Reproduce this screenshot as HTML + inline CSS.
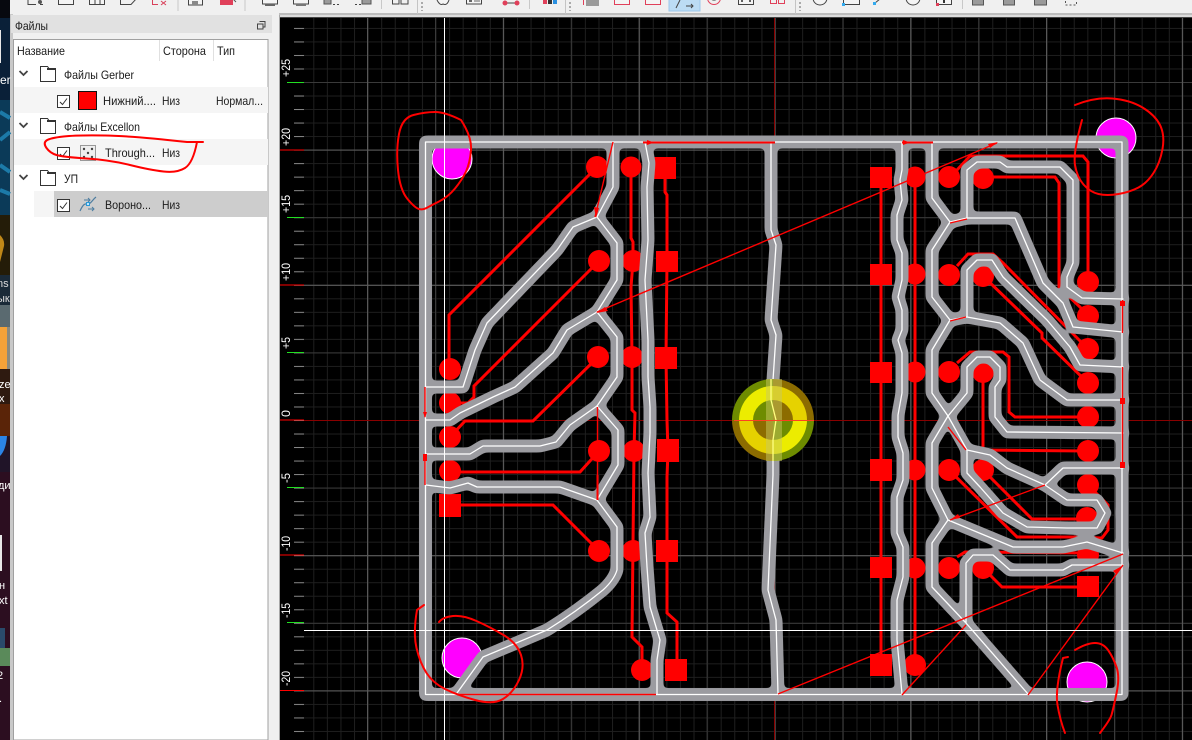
<!DOCTYPE html>
<html><head><meta charset="utf-8"><style>
html,body{margin:0;padding:0;background:#000;width:1192px;height:740px;overflow:hidden}
svg{display:block}
text{font-family:"Liberation Sans","Noto Sans CJK SC",sans-serif}
.t{font-size:12px;fill:#1a1a1a}
.r{font-size:12px;fill:#fff}
.tb{fill:#f4f4f4;stroke:#444;stroke-width:1}
.tg{fill:#9a9a9a;stroke:#555;stroke-width:1}
.tr{fill:#f4f4f4;stroke:#e0405a;stroke-width:1}
</style></head><body>
<svg width="1192" height="740" viewBox="0 0 1192 740" xmlns="http://www.w3.org/2000/svg">
<defs>
<filter id="smooth" filterUnits="userSpaceOnUse" x="380" y="100" width="790" height="630" color-interpolation-filters="sRGB">
<feGaussianBlur in="SourceAlpha" stdDeviation="2.2"/>
<feComponentTransfer result="a"><feFuncA type="linear" slope="10" intercept="-4.5"/></feComponentTransfer>
<feFlood flood-color="#9b9ba0"/>
<feComposite in2="a" operator="in"/>
</filter>
<pattern id="g1" patternUnits="userSpaceOnUse" x="775" y="420" width="13.58" height="13.52"><path d="M0.5 0V13.52M0 0.5H13.58" stroke="#1f1f1f" stroke-width="1" fill="none"/></pattern>
<pattern id="g5" patternUnits="userSpaceOnUse" x="774.5" y="420" width="67.9" height="67.6"><path d="M0.5 0V67.6M0 0.5H67.9" stroke="#3a3a3a" stroke-width="1" fill="none"/></pattern>
<pattern id="g10" patternUnits="userSpaceOnUse" x="774.5" y="420" width="135.8" height="135.2"><path d="M0.5 0V135.2M0 0.5H135.8" stroke="#5c5c5c" stroke-width="1" fill="none"/></pattern>
<pattern id="tick" patternUnits="userSpaceOnUse" x="294" y="420" width="10" height="13.52"><rect x="0" y="0" width="10" height="1" fill="#8a8a8a"/></pattern>
<g id="tr" fill="none" stroke-linejoin="round" stroke-linecap="round">
<path d="M425.5 142H1122V694.5H425.5Z"/>
<path d="M613 142V187L597 217L573 227L557 250L487 323L475 350L463 387H426"/>
<path d="M597 217L617 243V280L597 312L567 330L553 353L515 387L493 397L460 413L450 420H426"/>
<path d="M597 312L617 337V377L597 406L570 425L556 442L540 446H483L470 454H426"/>
<path d="M597 406L618 430V465L597 500L560 487H477L468 483L450 488L426 485"/>
<path d="M597 500L617 527V570Q614 580 603 590Q576 612 547 630L483 657L457 693"/>
<path d="M645 142L649 163L647 187L648 240L645 280L648 340V377L650 407L650 433L648 473L650 517L645 533L647 567L650 607L660 640L657 660V694"/>
<path d="M771 142V230L776 245L771 320L776 335L773 380V475L768 590L776 620L778 694"/>
<path d="M902 142V170L900 180L902 200L897 215V240L902 253V280L898 297L902 310V330L898 340L902 353V393L898 415V430L898 437L903 453V480L897 497V533L903 547V577L897 600V640L902 694"/>
<path d="M932 142V198L950 222L932 250V297L950 320L932 350V393L948 416L932 443V488L948 520L932 543V587L966 623L1028 694"/>
<path d="M948 520L1013 547H1063L1087 542L1123 553"/>
<path d="M948 416L967 393V367L977 357H990L1000 367V380L995 387V417L1007 432L1123 433"/>
<path d="M950 222L967 218H1015L1043 283L1063 303L1073 327L1123 332"/>
<path d="M967 218V170L977 162H1000L1007 167H1060L1073 180V263L1067 277V287L1082 298L1123 299"/>
<path d="M950 320L967 317L1000 323L1023 343L1040 380L1067 400H1123"/>
<path d="M967 317V270L977 260H992L1003 277L1047 320L1070 347L1080 365L1123 367"/>
<path d="M948 416L967 450L990 455L1007 468L1045 485L1063 468H1123"/>
<path d="M1045 485L1067 500H1097L1105 513L1097 528H1067L1027 527L1003 513L980 487L967 473V450"/>
<path d="M966 623V563L973 555H993L1010 570H1063L1072 565H1123"/>
</g>
</defs>

<!-- canvas -->
<rect x="279" y="17" width="913" height="723" fill="#000"/>
<rect x="304" y="18" width="888" height="722" fill="url(#g1)" shape-rendering="crispEdges"/>
<rect x="304" y="18" width="888" height="722" fill="url(#g5)" shape-rendering="crispEdges"/>
<rect x="304" y="18" width="888" height="722" fill="url(#g10)" shape-rendering="crispEdges"/>
<rect x="294" y="18" width="10" height="722" fill="url(#tick)" shape-rendering="crispEdges"/>
<g shape-rendering="crispEdges">
<path d="M287 82.5H304M287 217.5H304M287 352.5H304M287 487.5H304M287 622.5H304" stroke="#22e022" stroke-width="1"/>
<path d="M280 150H304M280 285H304M280 420H304M280 555H304M280 690.5H304" stroke="#ff0000" stroke-width="1"/>
</g>
<g>
<text class="r" transform="translate(290,77) rotate(-90)" textLength="18" lengthAdjust="spacingAndGlyphs">+25</text>
<text class="r" transform="translate(290,146) rotate(-90)" textLength="18" lengthAdjust="spacingAndGlyphs">+20</text>
<text class="r" transform="translate(290,213) rotate(-90)" textLength="18" lengthAdjust="spacingAndGlyphs">+15</text>
<text class="r" transform="translate(290,281) rotate(-90)" textLength="18" lengthAdjust="spacingAndGlyphs">+10</text>
<text class="r" transform="translate(290,349) rotate(-90)" textLength="12" lengthAdjust="spacingAndGlyphs">+5</text>
<text class="r" transform="translate(290,417) rotate(-90)" textLength="7" lengthAdjust="spacingAndGlyphs">0</text>
<text class="r" transform="translate(290,483) rotate(-90)" textLength="10" lengthAdjust="spacingAndGlyphs">-5</text>
<text class="r" transform="translate(290,551) rotate(-90)" textLength="15" lengthAdjust="spacingAndGlyphs">-10</text>
<text class="r" transform="translate(290,618) rotate(-90)" textLength="15" lengthAdjust="spacingAndGlyphs">-15</text>
<text class="r" transform="translate(290,686) rotate(-90)" textLength="15" lengthAdjust="spacingAndGlyphs">-20</text>
</g>

<!-- origin lines -->
<path d="M304 420.5H1192" stroke="#8a0000" stroke-width="1" shape-rendering="crispEdges"/>
<path d="M774.5 18V740" stroke="#8a0000" stroke-width="1" shape-rendering="crispEdges"/>

<!-- magenta -->
<g fill="#ff00ff" stroke="#fff" stroke-width="1">
<circle cx="452" cy="159" r="20"/><circle cx="462" cy="658" r="20"/><circle cx="1116" cy="138" r="20"/><circle cx="1087" cy="682" r="20"/>
</g>

<!-- copper traces -->
<g fill="none" stroke="#ff0000" stroke-width="3" stroke-linejoin="miter">
<path d="M597 167L449 315V369"/>
<path d="M599 261L474 386V397L468 403H450"/>
<path d="M598 357L533 421H465L450 437"/>
<path d="M599 451L580 472H450"/>
<path d="M599 551L553 505H450"/>
<path d="M631 167V238L633 242V261L631 287L632 357V410L635 413L634 451L632 637L642 647V670"/>
<path d="M665 167V192L667 195V261L666 357L667 420L668 451L667 477V613L677 622V670"/>
<path d="M881 177V665"/><path d="M915 177V665"/>
<path d="M957 170L970 156H1083L1088 162V282"/>
<path d="M983 177H1055L1059 183V287L1080 307L1088 316"/>
<path d="M957 266L968 254H993L1003 263L1088 349"/>
<path d="M983 276L1042 333V338L1088 383"/>
<path d="M957 363L970 352H1003L1009 357V412L1015 417H1088"/>
<path d="M983 372V450L1088 451"/>
<path d="M983 470L1032 519H1087"/>
<path d="M949 470L1017 537H1072"/>
<path d="M1088 485L1108 505V530L1102 538L1072 537"/>
<path d="M957 557L965 552L1088 553"/>
<path d="M983 568L1002 587H1088"/>
</g>
<g fill="#ff0000">
<circle cx="597" cy="167" r="11"/><circle cx="631" cy="167" r="10.5"/><rect x="654" y="157" width="22" height="22"/>
<circle cx="599" cy="261" r="11"/><circle cx="633" cy="261" r="11"/><rect x="656" y="251" width="22" height="21"/>
<circle cx="598" cy="357" r="11"/><circle cx="632" cy="357" r="11"/><rect x="655" y="347" width="22" height="22"/>
<circle cx="599" cy="451" r="11"/><circle cx="634" cy="451" r="11"/><rect x="657" y="439" width="22" height="23"/>
<circle cx="599" cy="551" r="11"/><circle cx="633" cy="551" r="11"/><rect x="656" y="540" width="22" height="22"/>
<circle cx="642" cy="670" r="11"/><rect x="665" y="659" width="22" height="22"/>
<circle cx="450" cy="369" r="11"/><circle cx="450" cy="403" r="11"/><circle cx="450" cy="437" r="11"/><circle cx="450" cy="471" r="11"/><rect x="439" y="494" width="22" height="23"/>
<rect x="870" y="167" width="22" height="21"/><circle cx="915" cy="177" r="10.5"/><circle cx="949" cy="177" r="11"/><circle cx="983" cy="178" r="11"/>
<rect x="870" y="264" width="22" height="21"/><circle cx="915" cy="274" r="10.5"/><circle cx="949" cy="275" r="11"/><circle cx="983" cy="276" r="11"/>
<rect x="870" y="362" width="22" height="21"/><circle cx="915" cy="372" r="10.5"/><circle cx="949" cy="372" r="11"/><circle cx="983" cy="372" r="11"/>
<rect x="870" y="459" width="22" height="22"/><circle cx="915" cy="470" r="10.5"/><circle cx="949" cy="470" r="11"/><circle cx="983" cy="470" r="11"/>
<rect x="870" y="557" width="22" height="21"/><circle cx="915" cy="568" r="10.5"/><circle cx="949" cy="568" r="11"/><circle cx="983" cy="568" r="11"/>
<rect x="870" y="654" width="22" height="22"/><circle cx="915" cy="665" r="11"/>
<circle cx="1088" cy="282" r="11"/><circle cx="1088" cy="316" r="11"/><circle cx="1088" cy="349" r="11"/><circle cx="1088" cy="383" r="11"/><circle cx="1088" cy="417" r="11"/><circle cx="1088" cy="451" r="11"/><circle cx="1088" cy="485" r="11"/><circle cx="1087" cy="518" r="11"/><circle cx="1088" cy="555" r="11"/><rect x="1077" y="576" width="22" height="21"/>
</g>

<!-- gray isolation + white centerline -->
<g filter="url(#smooth)"><use href="#tr" stroke="#9b9ba0" stroke-width="13"/></g>
<use href="#tr" stroke="#ffffff" stroke-width="1.3"/>

<!-- rapid moves -->
<g fill="none" stroke="#ff0000" stroke-width="1.4">
<path d="M613 142L595 217"/>
<path d="M997 143L597 312"/>
<path d="M643 142.5H775" stroke-width="2"/>
<path d="M902 142.5H933" stroke-width="2"/>
<path d="M597.5 407V500"/><path d="M597.5 475V500" stroke-width="2"/>
<path d="M425 387V417"/><path d="M425 454V485"/>
<path d="M457 694.5H656"/>
<path d="M950 223L967 219"/><path d="M950 321L966 317"/>
<path d="M1122.5 300V333"/><path d="M1122.5 367V468"/>
<path d="M948 427L966 450"/>
<path d="M1045 485L950 520"/>
<path d="M1123 554L778 694"/>
<path d="M1123 565L1028 695"/>
<path d="M966 625L902 695"/>
</g>
<g fill="#ff0000">
<path d="M647 140L654 142.5L647 145Z"/><path d="M903 140L910 142.5L903 145Z"/><path d="M998 142L988 144L990 148Z"/>
<path d="M596 218L599 208L594 207Z"/><path d="M596 313L605 307L608 311Z"/>
<path d="M423 412L427 412L425 418Z"/><path d="M423 454L427 454L427 461L423 461Z"/>
<path d="M1120 301H1125V306H1120Z"/><path d="M1120 398H1125V404H1120Z"/><path d="M1120 462H1125V468H1120Z"/>
<path d="M950 520L958 514L960 518Z"/><path d="M1122 566L1116 574L1113 571Z"/>
</g>

<!-- target -->
<g>
<path d="M773 420V379A41 41 0 0 0 732 420Z" fill="#6e8c00"/>
<path d="M773 420V379A41 41 0 0 1 814 420Z" fill="#8c6c00"/>
<path d="M773 420V461A41 41 0 0 1 732 420Z" fill="#8c6c00"/>
<path d="M773 420V461A41 41 0 0 0 814 420Z" fill="#6e8c00"/>
<path d="M773 420V386A34 34 0 0 0 739 420Z" fill="#ecec00"/>
<path d="M773 420V386A34 34 0 0 1 807 420Z" fill="#e6d200"/>
<path d="M773 420V454A34 34 0 0 1 739 420Z" fill="#e6d200"/>
<path d="M773 420V454A34 34 0 0 0 807 420Z" fill="#ecec00"/>
<path d="M773 420V400A20 20 0 0 0 753 420Z" fill="#6e8c00"/>
<path d="M773 420V400A20 20 0 0 1 793 420Z" fill="#8c6c00"/>
<path d="M773 420V440A20 20 0 0 1 753 420Z" fill="#8c6c00"/>
<path d="M773 420V440A20 20 0 0 0 793 420Z" fill="#6e8c00"/>
<path d="M766 379H782V461H766Z" fill="#c8c860" opacity=".5"/>
<path d="M771 379V400L776 420L773 440V461" stroke="#ffff80" stroke-width="1.3" fill="none"/>
<path d="M734 420.5H814" stroke="#ff4020" stroke-width="1"/>
</g>

<!-- cursor cross -->
<path d="M444.5 18V740M304 630.5H1192" stroke="#fff" stroke-width="1" shape-rendering="crispEdges"/>

<!-- toolbar -->
<rect x="0" y="0" width="1192" height="14" fill="#f0f0f0"/>
<rect x="10" y="13" width="1182" height="2" fill="#bdbdbd"/>
<rect x="279" y="15" width="913" height="3" fill="#dcdcdc"/>
<rect x="279" y="17" width="913" height="1" fill="#444"/>
<g>
<path d="M28 -2V4.5H36M40 4.5H43" fill="none" stroke="#444"/><circle cx="40" cy="2" r="2" fill="#555"/>
<rect class="tb" x="58.5" y="-4" width="15" height="8.5"/>
<rect class="tb" x="89.5" y="-4" width="15" height="8.5"/><path d="M95 0V4M100 0V4" stroke="#444"/>
<path d="M120.5 -2V4.5H131L137 -2" fill="none" stroke="#444"/>
<path d="M152.5 -2V4.5H158M161 1L166 5M166 1L161 5" fill="none" stroke="#d8405a"/>
<path d="M178 0V11" stroke="#c8c8c8"/>
<rect class="tb" x="188.5" y="-3" width="14" height="8"/><rect x="192" y="1" width="6" height="4" fill="#888"/>
<rect x="220" y="-3" width="13" height="8" fill="#e0405a"/><path d="M233 -1L236 2" stroke="#555"/>
<path d="M245 0V11" stroke="#c8c8c8"/>
<rect class="tb" x="262.5" y="-3" width="15" height="7"/><rect x="265" y="4" width="10" height="2" fill="#666"/>
<rect class="tb" x="293.5" y="-3" width="15" height="7"/><rect x="296" y="4" width="10" height="2" fill="#777"/>
<rect class="tg" x="324" y="-3" width="7" height="7"/><path d="M333 4.5H340" stroke="#444" stroke-dasharray="2 2"/>
<path d="M355 4.5H361" stroke="#444" stroke-dasharray="2 2"/><rect class="tg" x="362" y="-3" width="9" height="7"/>
<path d="M381.5 0V9" stroke="#c8c8c8"/>
<path d="M392.5 -1V4H399V-1M401 -1V4H408V-1" fill="none" stroke="#444"/>
<rect x="417" y="0" width="1" height="14" fill="#c4c4c4"/><path d="M422 2V11" stroke="#aaa" stroke-dasharray="2 2" stroke-width="2"/>
<path d="M437 0Q440 6 443 4Q447 6 449 0" fill="#f4f4f4" stroke="#444"/>
<rect class="tb" x="466.5" y="-3" width="15" height="7"/><rect x="469" y="0" width="3" height="2" fill="#666"/><path d="M474 1H480" stroke="#666"/>
<path d="M505 3H518" stroke="#444"/><circle cx="505" cy="3" r="2.5" fill="#e0405a"/><circle cx="517" cy="3" r="2.5" fill="#e0405a"/>
<path d="M529.5 0V9" stroke="#c8c8c8"/>
<rect x="543" y="-2" width="4" height="6" fill="#e0405a"/><rect x="548" y="-2" width="4" height="6" fill="#333"/><rect x="553" y="-2" width="4" height="6" fill="#2a90e0"/>
<rect x="565" y="0" width="1" height="14" fill="#c4c4c4"/><path d="M570 2V11" stroke="#aaa" stroke-dasharray="2 2" stroke-width="2"/>
<path d="M583.5 -1V5" stroke="#e0405a"/><rect x="586" y="-2" width="13" height="8" fill="#9a9a9a"/>
<rect class="tr" x="614.5" y="-4" width="15" height="8.5"/>
<rect class="tr" x="645.5" y="-4" width="15" height="8.5"/>
<rect x="669" y="-1" width="31" height="12" fill="#bcdcf4" stroke="#9cc8ec"/>
<path d="M676 8L680 0M686 6H693M691 4L693 6L691 8" fill="none" stroke="#444"/>
<circle cx="714" cy="-2" r="6.5" fill="none" stroke="#e0405a"/><circle cx="714" cy="-2" r="3" fill="#888"/>
<rect class="tb" x="738.5" y="-4" width="15" height="8.5"/><circle cx="742" cy="1" r="1" fill="#333"/><circle cx="750" cy="1" r="1" fill="#333"/>
<path d="M770.5 -1V3.5H776.5V-1M778.5 -1V3.5H784.5V-1" fill="none" stroke="#e0405a"/>
<rect x="795" y="0" width="1" height="14" fill="#c4c4c4"/><path d="M800 2V11" stroke="#aaa" stroke-dasharray="2 2" stroke-width="2"/>
<circle cx="820" cy="-2" r="7" fill="#f4f4f4" stroke="#444"/>
<rect class="tb" x="843.5" y="-3" width="16" height="7.5"/><rect x="842" y="3" width="3" height="3" fill="#33aaee"/>
<path d="M875 3L880 -1" stroke="#444"/><rect x="873" y="2" width="3" height="3" fill="#33aaee"/>
<circle cx="913" cy="-2" r="7" fill="#f4f4f4" stroke="#444"/>
<rect class="tb" x="936.5" y="-3" width="15" height="7.5"/><rect x="936" y="3" width="3" height="3" fill="#e0405a"/><rect x="943" y="0" width="2" height="3" fill="#333"/>
<path d="M962.5 0V9" stroke="#c8c8c8"/>
<rect class="tg" x="972.5" y="-3" width="11" height="8"/><rect class="tg" x="1003.5" y="-3" width="11" height="8"/><rect class="tg" x="1034.5" y="-3" width="12" height="8"/>
<rect x="1065.5" y="-3" width="11" height="8" fill="none" stroke="#555" stroke-dasharray="2 2"/>
</g>

<!-- dock panel -->
<rect x="10" y="13" width="269" height="727" fill="#f0f0f0"/>
<rect x="10" y="14" width="3" height="726" fill="#c9c9c9"/>
<rect x="11" y="15" width="261" height="18" fill="#e1e1e1"/>
<rect x="279" y="15" width="1" height="725" fill="#a8a8a8"/>
<text class="t" x="15" y="30" textLength="33" lengthAdjust="spacingAndGlyphs">Файлы</text>
<path d="M259.5 21.5h5.5v5.5h-2M257.5 24h5.5v5h-5.5z" fill="none" stroke="#444"/>
<rect x="13.5" y="39.5" width="254.5" height="700.5" fill="#fff" stroke="#a0a0a0"/>
<!-- row backgrounds -->
<rect x="14" y="87" width="254" height="26" fill="#f5f5f5"/>
<rect x="14" y="139" width="254" height="26" fill="#f5f5f5"/>
<rect x="34" y="191" width="20" height="26" fill="#f5f5f5"/>
<rect x="54" y="191" width="214" height="26" fill="#cdcdcd"/>
<!-- header -->
<path d="M159.5 40V61M213.5 40V61" stroke="#e0e0e0"/>
<text class="t" x="17" y="55" textLength="48" lengthAdjust="spacingAndGlyphs">Название</text>
<text class="t" x="163" y="55" textLength="43" lengthAdjust="spacingAndGlyphs">Сторона</text>
<text class="t" x="217" y="55" textLength="18" lengthAdjust="spacingAndGlyphs">Тип</text>
<!-- chevrons -->
<g fill="none" stroke="#444" stroke-width="1.8">
<path d="M19.5 71L23.5 75L27.5 71"/><path d="M19.5 123L23.5 127L27.5 123"/><path d="M19.5 175L23.5 179L27.5 175"/>
</g>
<!-- folders -->
<g fill="#fff" stroke="#333">
<path d="M40.5 81.5V66.5H47.5L49 68.5H55.5V81.5Z"/>
<path d="M40.5 133.5V118.5H47.5L49 120.5H55.5V133.5Z"/>
<path d="M40.5 185.5V170.5H47.5L49 172.5H55.5V185.5Z"/>
</g>
<g fill="#333"><rect x="47" y="68" width="9" height="2"/><rect x="47" y="120" width="9" height="2"/><rect x="47" y="172" width="9" height="2"/></g>
<text class="t" x="64" y="79" textLength="70" lengthAdjust="spacingAndGlyphs">Файлы Gerber</text>
<text class="t" x="64" y="131" textLength="76" lengthAdjust="spacingAndGlyphs">Файлы Excellon</text>
<text class="t" x="64" y="183" textLength="14" lengthAdjust="spacingAndGlyphs">УП</text>
<!-- checkboxes -->
<g fill="none" stroke="#333">
<rect x="57.5" y="95.5" width="12" height="12" fill="#fff"/><path d="M60 102L62.5 104.5L67 98.5"/>
<rect x="57.5" y="147.5" width="12" height="12" fill="#fff"/><path d="M60 154L62.5 156.5L67 150.5"/>
<rect x="57.5" y="199.5" width="12" height="12" fill="#fff"/><path d="M60 206L62.5 208.5L67 202.5"/>
</g>
<rect x="78.5" y="91.5" width="18" height="18" fill="#ff0000" stroke="#111"/>
<rect x="80.5" y="145.5" width="15" height="15" fill="#efefef" stroke="#999"/>
<g fill="#444"><circle cx="84" cy="149" r="1.2"/><circle cx="92" cy="149" r="1.2"/><circle cx="88" cy="153" r="1.2"/><circle cx="84" cy="157" r="1.2"/><circle cx="92" cy="157" r="1.2"/></g>
<path d="M80 211C84 202 86 204 88 204C91 204 92 200 96 197" fill="none" stroke="#4d7da0" stroke-width="1.2"/>
<rect x="86.5" y="202.5" width="3" height="3" fill="#bfe6ff" stroke="#2a9ad8"/>
<path d="M84 200H90M88 198L90 200L88 202M88 209H94M92 207L94 209L92 211" fill="none" stroke="#4d7da0"/>
<text class="t" x="103" y="105" textLength="53" lengthAdjust="spacingAndGlyphs">Нижний....</text>
<text class="t" x="162" y="105" textLength="18" lengthAdjust="spacingAndGlyphs">Низ</text>
<text class="t" x="216" y="105" textLength="47" lengthAdjust="spacingAndGlyphs">Нормал...</text>
<text class="t" x="105" y="157" textLength="50" lengthAdjust="spacingAndGlyphs">Through...</text>
<text class="t" x="162" y="157" textLength="18" lengthAdjust="spacingAndGlyphs">Низ</text>
<text class="t" x="105" y="209" textLength="46" lengthAdjust="spacingAndGlyphs">Вороно...</text>
<text class="t" x="162" y="209" textLength="18" lengthAdjust="spacingAndGlyphs">Низ</text>

<!-- desktop strip -->
<rect x="0" y="0" width="10" height="18" fill="#07090f"/>
<rect x="0" y="18" width="10" height="82" fill="#0a2038"/>
<rect x="0" y="30" width="1" height="33" fill="#e8e8e8"/>
<rect x="0" y="100" width="10" height="115" fill="#0b3a58"/>
<path d="M0 112L10 118M0 140L10 132M0 165L10 172M0 190L10 194" stroke="#1c7aa8" stroke-width="4"/>
<rect x="0" y="215" width="10" height="60" fill="#241c08"/>
<path d="M0 235Q5 240 4 246L0 262Z" fill="#c08818"/>
<rect x="0" y="275" width="10" height="30" fill="#1a2a38"/>
<rect x="0" y="305" width="10" height="22" fill="#5a6a70"/>
<rect x="0" y="327" width="7" height="42" fill="#f5a238"/><rect x="7" y="327" width="3" height="42" fill="#8a8a80"/>
<rect x="0" y="369" width="10" height="35" fill="#2e1a10"/>
<rect x="0" y="404" width="10" height="32" fill="#5a2408"/>
<rect x="0" y="436" width="10" height="36" fill="#201428"/>
<path d="M0 436H7Q6 450 0 456Z" fill="#2b84e6"/>
<rect x="0" y="472" width="10" height="268" fill="#2c0e20"/>
<rect x="0" y="535" width="2" height="36" fill="#e8e8e8"/>
<rect x="0" y="628" width="5" height="20" fill="#2a4a6a"/>
<rect x="0" y="648" width="10" height="18" fill="#5a8a5a"/>
<g>
<text x="0" y="84" style="font-size:12px;fill:#fff">er</text>
<text x="-3" y="287" style="font-size:11px;fill:#ddd">ns</text>
<text x="-3" y="302" style="font-size:11px;fill:#ddd">ык</text>
<text x="-1" y="388" style="font-size:11px;fill:#fff">ze</text>
<text x="-1" y="402" style="font-size:11px;fill:#fff">x</text>
<text x="-2" y="489" style="font-size:11px;fill:#fff">ди</text>
<text x="-1" y="589" style="font-size:11px;fill:#fff">н</text>
<text x="-1" y="604" style="font-size:11px;fill:#fff">xt</text>
<text x="-3" y="679" style="font-size:11px;fill:#fff">2</text>
<text x="-1" y="702" style="font-size:11px;fill:#fff">.</text>
</g>

<!-- hand-drawn annotations -->
<g fill="none" stroke="#ff0000" stroke-width="2" stroke-linejoin="round" stroke-linecap="round">
<path d="M203 142L187 142Q133 136 105 135.5Q77 135 63.5 136.5Q50 138 46.5 140.5Q43 143 46.5 148Q50 153 56.5 155Q63 157 86.5 158.5Q110 160 130 165Q150 170 163.5 171.5Q177 173 185 168Q193 163 197 142"/>
<path d="M461 120Q472 137 471 150Q470 163 466 171.5Q462 180 455 188.5Q448 197 439 201.5Q430 206 426.5 208Q423 210 419 209Q415 208 407.5 199Q400 190 398 170Q396 150 399 134Q402 118 413.5 115Q425 112 435 112Q445 112 461 120"/>
<path d="M1082 120Q1073 153 1075 165Q1077 177 1083.5 184.5Q1090 192 1098.5 194Q1107 196 1118.5 194Q1130 192 1138.5 187.5Q1147 183 1153.5 173Q1160 163 1162.5 149Q1165 135 1160 125Q1155 115 1142.5 107.5Q1130 100 1112.5 98.5Q1095 97 1075 105"/>
<path d="M424 605L417 610Q413 633 416.5 648Q420 663 426.5 673Q433 683 445 689Q457 695 475 700Q493 705 503 699Q513 693 519 680Q525 667 521 655Q517 643 503.5 635Q490 627 476.5 621Q463 615 453 616Q443 617 439 622"/>
<path d="M1068 657L1063 658Q1055 690 1057.5 705Q1060 720 1065 733"/>
<path d="M1075 650Q1087 643 1095 643Q1103 643 1108 650Q1113 657 1116.5 667Q1120 677 1116.5 693.5Q1113 710 1111.5 715Q1110 720 1100 733"/>
</g>
</svg>
</body></html>
